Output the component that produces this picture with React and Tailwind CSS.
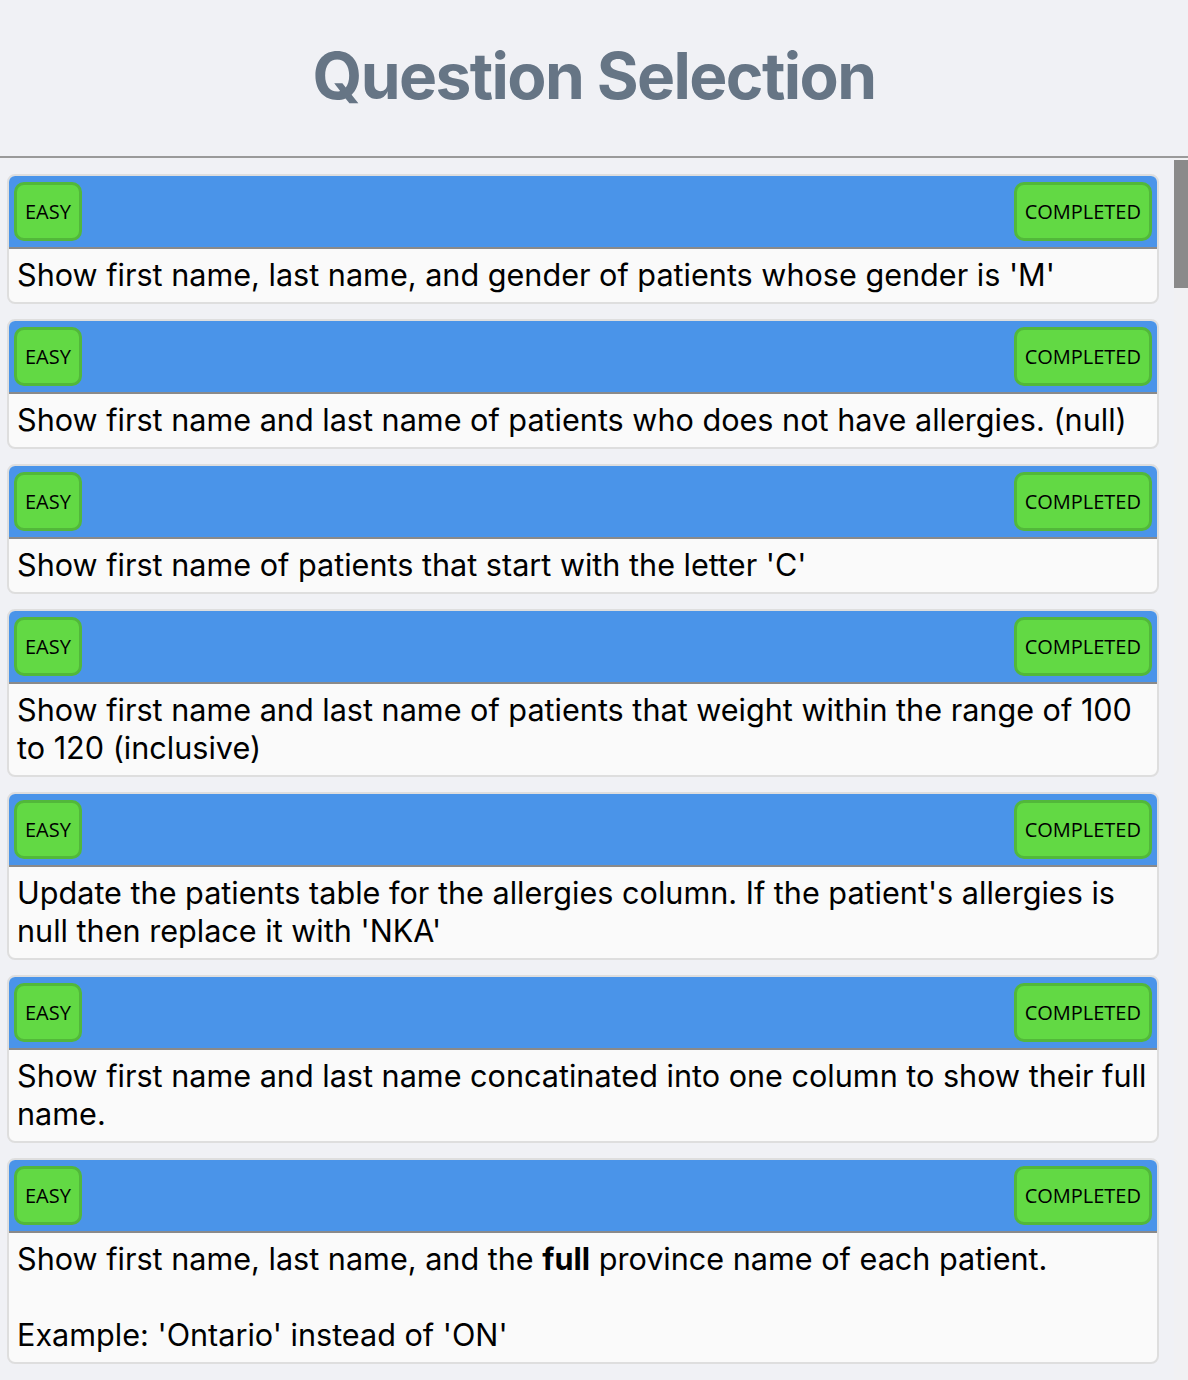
import React from "react";

const questions = [
  { text: "Show first name, last name, and gender of patients whose gender is 'M'" },
  { text: "Show first name and last name of patients who does not have allergies. (null)" },
  { text: "Show first name of patients that start with the letter 'C'" },
  { text: "Show first name and last name of patients that weight within the range of 100 to 120 (inclusive)" },
  { text: "Update the patients table for the allergies column. If the patient's allergies is null then replace it with 'NKA'" },
  { text: "Show first name and last name concatinated into one column to show their full name." },
  {
    node: (
      <>
        Show first name, last name, and the <b>full</b> province name of each patient.
        <br />
        <br />
        Example: 'Ontario' instead of 'ON'
      </>
    ),
  },
];

function Badge({ children }) {
  return (
    <div className="h-[59px] border-[3px] border-[#52b83a] bg-[#62d944] rounded-[10px] px-[8px] flex items-center text-[20px] text-black font-['Open_Sans',sans-serif]">
      {children}
    </div>
  );
}

function Card({ q }) {
  return (
    <div className="shrink-0 border-2 border-[#dedede] rounded-lg overflow-hidden bg-[#fafafa]">
      <div className="h-[73px] bg-[#4a94e9] border-b-2 border-[#8a8a8a] px-[5px] flex items-center justify-between">
        <Badge>EASY</Badge>
        <Badge>COMPLETED</Badge>
      </div>
      <div className="px-2 pt-[7px] pb-[8px] text-[30.6px] leading-[38px] text-black font-['Inter',sans-serif]">
        {q.node || q.text}
      </div>
    </div>
  );
}

export default function App() {
  return (
    <div className="h-[1380px] overflow-hidden bg-[#f0f1f5] flex flex-col">
      <header className="h-[158px] shrink-0 border-b-2 border-[#9a9a9a] flex items-center justify-center pb-1">
        <h1 className="text-[64px] font-bold tracking-tight text-[#667585] font-['Inter',sans-serif]">
          Question Selection
        </h1>
      </header>
      <div className="flex flex-1 min-h-0">
        <div className="flex-1 min-w-0 pl-[7px] pr-[15px] pt-4 flex flex-col gap-[15px] overflow-hidden">
          {questions.map((q, i) => (
            <Card key={i} q={q} />
          ))}
        </div>
        <div className="w-[14px] shrink-0 bg-[#f1f1f3] pt-[2px]">
          <div className="h-[128px] bg-[#8a8a8a]" />
        </div>
      </div>
    </div>
  );
}
